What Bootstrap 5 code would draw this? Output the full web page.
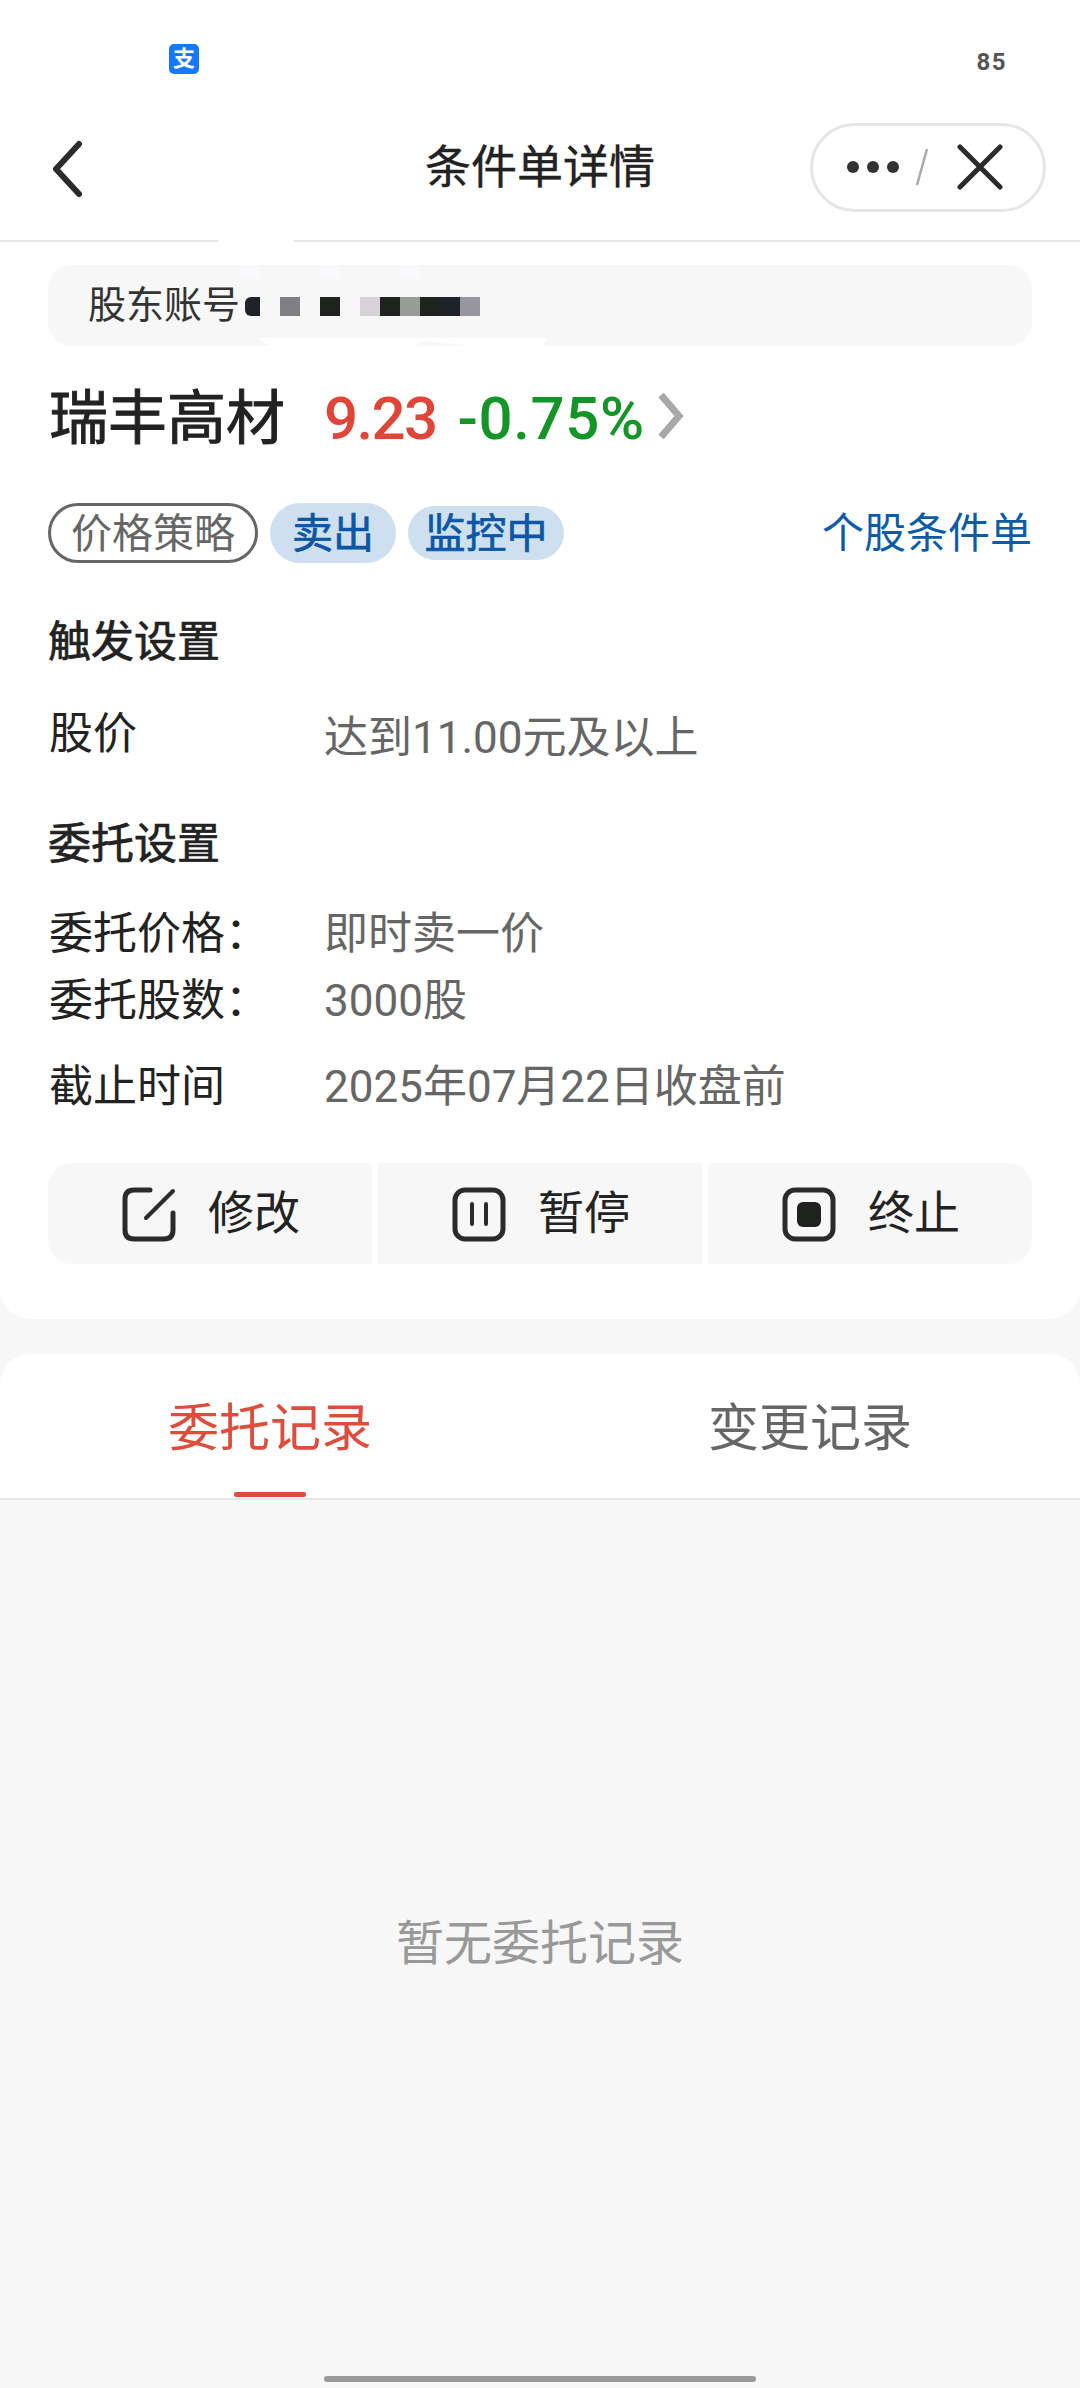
<!DOCTYPE html>
<html lang="zh-CN">
<head>
  <meta charset="UTF-8" />
  <meta name="viewport" content="width=device-width, initial-scale=1" />
  <title>条件单详情</title>
  <link href="https://cdn.jsdelivr.net/npm/bootstrap@5.3.3/dist/css/bootstrap.min.css" rel="stylesheet" />
  <style>
    html, body { height: 2388px; overflow: hidden; }
    body { background: #f7f7f7; color: #222; font-family: Roboto, "Noto Sans CJK SC", sans-serif; font-size: 42px; line-height: 1.2; position: relative; }
    .status-row { height: 108px; padding: 44px 73px 0 169px; }
    .pay-icon { width: 30px; height: 30px; border-radius: 5px; background: #1677ff; color: #fff; font-size: 22px; line-height: 30px; font-weight: 700; text-align: center; }
    .batt { font-size: 24px; font-weight: 700; color: #555; margin-top: 4px; letter-spacing: 1.5px; }
    .top-head { height: 134px; padding: 0 34px 14px 34px; display: grid; grid-template-columns: 1fr auto 1fr; align-items: center; background: #fff; border-bottom: 2px solid #e6e6ea; }
    .top-head > svg { margin: 4px 0 0 18px; }
    .top-title { font-size: 46px; line-height: 1; font-weight: 400; color: #222; -webkit-text-stroke: .4px #222; }
    .capsule { width: 236px; height: 89px; border: 3px solid #e6e6e6; border-radius: 45px; padding: 0 40px 0 34px; }
    .dot { width: 12px; height: 12px; border-radius: 50%; background: #333; }
    .main-card { background: #fff; height: 1077px; padding: 23px 48px 0; border-radius: 0 0 30px 30px; position: relative; }
    .acct-box { height: 81px; border-radius: 24px; background: #f7f7f7; padding: 0 40px; font-size: 38px; color: #333; }
    .acct-box span { line-height: 81px; }
    .pixel-run { height: 19px; margin-left: 5px; margin-top: 1px; }
    .pixel-run i { display: block; width: 20px; height: 19px; }
    .scrap { position: absolute; background: #fff; }
    .scrap-a { left: 218px; top: -2px; width: 76px; height: 20px; }
    .scrap-c { left: 258px; top: 96px; width: 290px; height: 8px; clip-path: polygon(0 0, 100% 0, 98% 100%, 73% 100%, 58% 30%, 54% 100%, 4% 100%); }
    .faint { position: absolute; top: 23px; width: 20px; height: 13px; background: #f8f8fd; }
    .stock-row { margin-top: 37px; height: 72px; }
    .stock-name { font-size: 59px; line-height: 72px; font-weight: 400; width: 276px; padding-left: 1px; color: #222; -webkit-text-stroke: .9px #222; }
    .stock-price { font-size: 60px; line-height: 72px; font-weight: 500; color: #e0453a; letter-spacing: -1.6px; }
    .stock-chg { font-size: 60px; line-height: 72px; font-weight: 500; color: #159427; margin-left: 21px; letter-spacing: .6px; }
    .stock-row svg { margin: -6px 0 0 12px; }
    .tag-row { margin-top: 48px; height: 60px; font-size: 41px; }
    .tag-line { height: 60px; width: 210px; border: 3px solid #666; border-radius: 30px; color: #666; line-height: 56px; text-align: center; }
    .tag-fill { height: 60px; width: 126px; margin-left: 12px; border-radius: 30px; background: #cedff0; color: #0b57a5; line-height: 62px; text-align: center; -webkit-text-stroke: .7px #0b57a5; }
    .tag-mon { height: 54px; width: 156px; line-height: 56px; }
    .stock-link { font-size: 42px; color: #0b5ca8; padding-top: 2px; }
    .sec-title { font-size: 43px; line-height: 50px; font-weight: 400; color: #222; -webkit-text-stroke: .7px #222; }
    .line-row { font-size: 44px; line-height: 56px; }
    .line-key { width: 276px; padding-left: 1px; color: #222; }
    .line-val { color: #666; }
    .act-row { margin-top: 48px; height: 101px; gap: 6px; }
    .act-btn { flex: 1; background: #f7f7f7; font-size: 46px; color: #222; gap: 32px; padding-left: 2px; }
    .act-btn:first-child { border-radius: 24px 0 0 24px; }
    .act-btn:last-child { border-radius: 0 24px 24px 0; }
    .tab-card { margin-top: 35px; height: 146px; background: #fff; border-radius: 30px 30px 0 0; border-bottom: 2px solid #e6e6e6; }
    .tab-item { flex: 1; padding-top: 45px; font-size: 51px; line-height: 60px; color: #666; text-align: center; position: relative; }
    .tab-on { color: #e04c3c; }
    .tab-on::after { content: ""; position: absolute; left: 234px; top: 138px; width: 72px; height: 5px; border-radius: 2px; background: #e04c3c; }
    .empty-text { margin-top: 414px; font-size: 48px; line-height: 60px; color: #999; text-align: center; }
    .home-bar { position: absolute; left: 324px; top: 2376px; width: 432px; height: 6px; border-radius: 3px; background: #9a9a9a; }
  </style>
</head>
<body>

  <div style="background:#fff">
    <div class="status-row d-flex justify-content-between align-items-start">
      <div class="pay-icon">支</div>
      <div class="batt">85</div>
    </div>
    <div class="top-head">
      <svg width="30" height="58" viewBox="0 0 30 58" fill="none" stroke="#2b2b2b" stroke-width="6" stroke-linecap="round" stroke-linejoin="round"><path d="M27 4 4 29 27 54"/></svg>
      <div class="top-title">条件单详情</div>
      <div class="d-flex justify-content-end">
        <div class="capsule d-flex align-items-center">
          <div class="d-flex gap-2"><span class="dot"></span><span class="dot"></span><span class="dot"></span></div>
          <svg class="ms-3" width="14" height="38" viewBox="0 0 14 38" stroke="#aaa" stroke-width="2.5"><path d="M12 1 2 37"/></svg>
          <svg class="ms-auto" width="46" height="46" viewBox="0 0 46 46" stroke="#2b2b2b" stroke-width="5" stroke-linecap="round"><path d="M3 3 43 43M43 3 3 43"/></svg>
        </div>
      </div>
    </div>
  </div>

  <div class="main-card">
    <div class="acct-box d-flex align-items-center">
      <span>股东账号</span>
      <div class="pixel-run d-flex">
        <i style="background:#1f2329;width:15px;border-radius:6px 0 0 6px"></i>
        <i style="background:transparent"></i>
        <i style="background:#7f7f84"></i>
        <i style="background:transparent"></i>
        <i style="background:#20221f"></i>
        <i style="background:transparent"></i>
        <i style="background:#d5d3d6"></i>
        <i style="background:#20221f"></i>
        <i style="background:#999b98"></i>
        <i style="background:#20221f"></i>
        <i style="background:#1f2329"></i>
        <i style="background:#96969c"></i>
      </div>
    </div>
    <div class="scrap scrap-a"></div>
    <div class="scrap scrap-c"></div>
    <div class="faint" style="left:240px"></div>
    <div class="faint" style="left:320px"></div>
    <div class="faint" style="left:400px"></div>

    <div class="stock-row d-flex align-items-center">
      <div class="stock-name">瑞丰高材</div>
      <div class="stock-price">9.23</div>
      <div class="stock-chg">-0.75%</div>
      <svg width="28" height="46" viewBox="0 0 28 46" fill="none" stroke="#a8a8aa" stroke-width="7" stroke-linejoin="miter"><path d="M4 2 22 23 4 44"/></svg>
    </div>

    <div class="tag-row d-flex align-items-center">
      <div class="tag-line">价格策略</div>
      <div class="tag-fill">卖出</div>
      <div class="tag-fill tag-mon">监控中</div>
      <div class="stock-link ms-auto">个股条件单</div>
    </div>

    <div class="sec-title" style="margin-top:54px">触发设置</div>
    <div class="line-row d-flex" style="margin-top:39px">
      <div class="line-key">股价</div>
      <div class="line-val" style="margin-top:4px">达到11.00元及以上</div>
    </div>
    <div class="sec-title" style="margin-top:53px">委托设置</div>
    <div class="line-row d-flex" style="margin-top:37px">
      <div class="line-key">委托价格：</div>
      <div class="line-val">即时卖一价</div>
    </div>
    <div class="line-row d-flex" style="margin-top:11px">
      <div class="line-key">委托股数：</div>
      <div class="line-val">3000股</div>
    </div>
    <div class="line-row d-flex" style="margin-top:30px">
      <div class="line-key">截止时间</div>
      <div class="line-val">2025年07月22日收盘前</div>
    </div>

    <div class="act-row d-flex">
      <div class="act-btn d-flex align-items-center justify-content-center">
        <svg width="54" height="56" viewBox="0 0 54 56" fill="none" stroke="#2a2c2a" stroke-width="5" stroke-linecap="round"><path d="M28 4H12Q3 4 3 13V44Q3 53 12 53H42Q51 53 51 44V27"/><path d="M51 5 24 32" stroke-width="4"/></svg>
        <span>修改</span>
      </div>
      <div class="act-btn d-flex align-items-center justify-content-center">
        <svg width="54" height="56" viewBox="0 0 54 56" fill="none" stroke="#2a2c2a" stroke-width="5"><rect x="3" y="4" width="48" height="49" rx="10"/><path d="M20 18V38M34 18V38" stroke-width="4" stroke-linecap="round"/></svg>
        <span>暂停</span>
      </div>
      <div class="act-btn d-flex align-items-center justify-content-center">
        <svg width="54" height="56" viewBox="0 0 54 56" fill="none" stroke="#2a2c2a" stroke-width="5"><rect x="3" y="4" width="48" height="49" rx="10"/><rect x="15" y="16" width="24" height="25" rx="6" fill="#20221f" stroke="none"/></svg>
        <span>终止</span>
      </div>
    </div>
  </div>

  <div class="tab-card d-flex">
    <div class="tab-item tab-on">委托记录</div>
    <div class="tab-item">变更记录</div>
  </div>

  <div class="empty-text">暂无委托记录</div>
  <div class="home-bar"></div>

  <script src="https://cdn.jsdelivr.net/npm/bootstrap@5.3.3/dist/js/bootstrap.bundle.min.js"></script>
</body>
</html>
